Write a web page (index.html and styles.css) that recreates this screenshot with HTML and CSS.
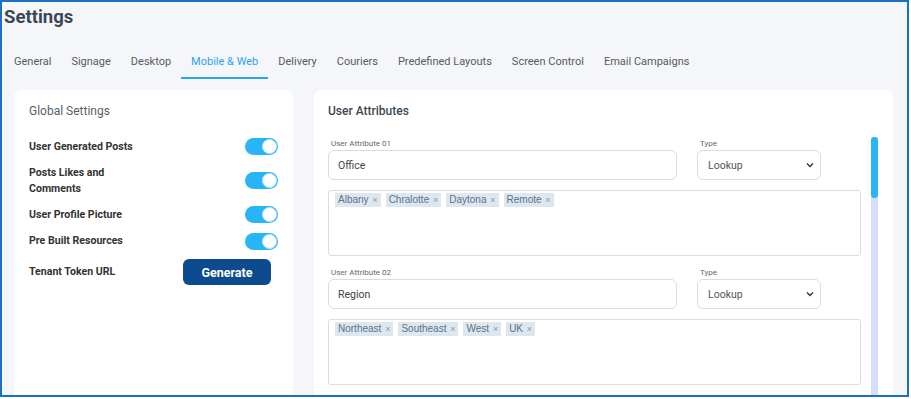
FILE: index.html
```html
<!DOCTYPE html>
<html>
<head>
  <title>Settings</title>
  <link rel="stylesheet" href="styles.css">
</head>
<body>
  <div class="frame">
    <h1 class="page-title">Settings</h1>
    <nav class="tabs">
      <a class="tab">General</a>
      <a class="tab">Signage</a>
      <a class="tab">Desktop</a>
      <a class="tab active">Mobile &amp; Web</a>
      <a class="tab">Delivery</a>
      <a class="tab">Couriers</a>
      <a class="tab">Predefined Layouts</a>
      <a class="tab">Screen Control</a>
      <a class="tab">Email Campaigns</a>
    </nav>

    <div class="panels">
      <div class="card global">
        <h2 class="card-title">Global Settings</h2>
        <div class="setting-row">
          <span class="setting-label">User Generated Posts</span>
          <span class="toggle on"><span class="knob"></span></span>
        </div>
        <div class="setting-row">
          <span class="setting-label">Posts Likes and Comments</span>
          <span class="toggle on"><span class="knob"></span></span>
        </div>
        <div class="setting-row">
          <span class="setting-label">User Profile Picture</span>
          <span class="toggle on"><span class="knob"></span></span>
        </div>
        <div class="setting-row">
          <span class="setting-label">Pre Built Resources</span>
          <span class="toggle on"><span class="knob"></span></span>
        </div>
        <div class="setting-row">
          <span class="setting-label">Tenant Token URL</span>
          <button class="btn-generate">Generate</button>
        </div>
      </div>

      <div class="card attributes">
        <h2 class="card-title dark">User Attributes</h2>
        <div class="scroll-area">
          <div class="attr-list">
            <div class="attr">
              <div class="attr-head">
                <div class="field name-field">
                  <label>User Attribute 01</label>
                  <div class="input">Office</div>
                </div>
                <div class="field type-field">
                  <label>Type</label>
                  <div class="select">
                    <span>Lookup</span>
                    <svg width="8" height="6" viewBox="0 0 8 6"><path d="M1 1.5 L4 4.5 L7 1.5" fill="none" stroke="#333" stroke-width="1.4"/></svg>
                  </div>
                </div>
              </div>
              <div class="tag-box">
                <span class="tag">Albany <i>×</i></span>
                <span class="tag">Chralotte <i>×</i></span>
                <span class="tag">Daytona <i>×</i></span>
                <span class="tag">Remote <i>×</i></span>
              </div>
            </div>

            <div class="attr">
              <div class="attr-head">
                <div class="field name-field">
                  <label>User Attribute 02</label>
                  <div class="input">Region</div>
                </div>
                <div class="field type-field">
                  <label>Type</label>
                  <div class="select">
                    <span>Lookup</span>
                    <svg width="8" height="6" viewBox="0 0 8 6"><path d="M1 1.5 L4 4.5 L7 1.5" fill="none" stroke="#333" stroke-width="1.4"/></svg>
                  </div>
                </div>
              </div>
              <div class="tag-box">
                <span class="tag">Northeast <i>×</i></span>
                <span class="tag">Southeast <i>×</i></span>
                <span class="tag">West <i>×</i></span>
                <span class="tag">UK <i>×</i></span>
              </div>
            </div>
          </div>
          <div class="scrollbar"><div class="thumb"></div></div>
        </div>
      </div>
    </div>
  </div>
</body>
</html>
```

FILE: styles.css
```css
body {
  margin: 0;
  font-family: Roboto, "Liberation Sans", sans-serif;
  background: #fff;
}

.frame {
  width: 905px;
  height: 393px;
  border: 2px solid #1c6fc3;
  background: #f5f6fa;
  overflow: hidden;
}

.page-title {
  margin: 0;
  padding: 2px 0 0 2px;
  font-size: 18.5px;
  font-weight: bold;
  line-height: 26px;
  color: #3b4854;
}

.tabs {
  display: flex;
  margin-top: 25px;
  padding-left: 2px;
}

.tab {
  padding: 0 10px 8px;
  font-size: 11px;
  line-height: 14px;
  color: #555b61;
  border-bottom: 2px solid transparent;
}

.tab.active {
  color: #2aa6ef;
  border-bottom-color: #2aa6ef;
}

.panels {
  display: grid;
  grid-template-columns: 279px 579px;
  column-gap: 21px;
  margin-top: 11px;
  padding-left: 12px;
}

.card {
  background: #fff;
  border-radius: 8px;
  height: 320px;
}

.card-title {
  margin: 0 0 16px;
  font-size: 12px;
  font-weight: normal;
  line-height: 20px;
  color: #5a5f64;
}

.card-title.dark {
  font-weight: 500;
  color: #3b4854;
}

.global {
  padding: 11px 15px 0;
}

.global .card-title {
  margin-bottom: 17px;
}

.setting-row {
  display: grid;
  grid-template-columns: 112px 1fr;
  align-items: center;
  margin-bottom: 9.6px;
}

.setting-label {
  font-size: 10.6px;
  font-weight: bold;
  line-height: 16px;
  color: #333;
}

.toggle {
  justify-self: end;
  width: 33px;
  height: 17px;
  border-radius: 9px;
  background: #29b4f5;
  position: relative;
}

.toggle .knob {
  position: absolute;
  right: 1px;
  top: 1px;
  width: 13px;
  height: 13px;
  border-radius: 50%;
  background: #fff;
  border: 1px solid #bfe7fb;
}

.btn-generate {
  justify-self: end;
  margin-right: 7px;
  width: 88px;
  height: 26px;
  border: none;
  border-radius: 6px;
  background: #0c4c8e;
  color: #fff;
  font-family: Roboto, sans-serif;
  font-size: 12.5px;
  font-weight: bold;
}

.attributes {
  padding: 11px 15px 0 14px;
}

.scroll-area {
  display: flex;
}

.attr-list {
  width: 533px;
  padding-top: 2px;
}

.attr {
  margin-bottom: 12px;
}

.attr-head {
  display: flex;
  gap: 20px;
  margin-bottom: 10px;
}

.field label {
  display: block;
  font-size: 8px;
  line-height: 9px;
  color: #666;
  margin: 0 0 2px 3px;
}

.name-field {
  width: 349px;
}

.type-field {
  width: 124px;
}

.input,
.select {
  box-sizing: border-box;
  height: 30px;
  border: 1px solid #dcdcdc;
  border-radius: 6px;
  font-size: 10.5px;
  color: #444;
  display: flex;
  align-items: center;
  padding: 0 9px;
}

.select {
  justify-content: space-between;
  padding: 0 6px 0 10px;
  color: #555;
}

.tag-box {
  box-sizing: border-box;
  height: 66px;
  border: 1px solid #dcdcdc;
  border-radius: 3px;
  padding: 2px 6px;
  display: flex;
  align-items: flex-start;
  gap: 5px;
}

.tag {
  background: #dce7f0;
  color: #5b7287;
  font-family: "Liberation Sans", Arial, sans-serif;
  font-size: 10px;
  line-height: 14px;
  padding: 0 3px;
}

.tag i {
  font-style: normal;
  font-size: 9px;
  color: #8a9aa8;
  margin-left: 1px;
}

.scrollbar {
  margin-left: 10px;
  width: 7px;
  height: 260px;
  background: #d6defa;
}

.thumb {
  height: 61px;
  border-radius: 4px;
  background: #29b4f5;
}
```
